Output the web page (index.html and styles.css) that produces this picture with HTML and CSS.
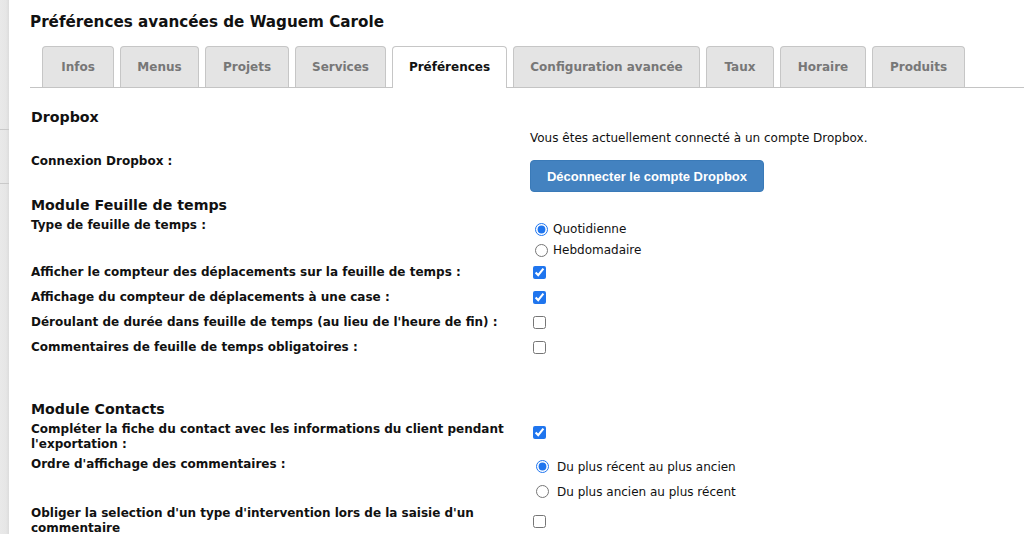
FILE: index.html
```html
<!DOCTYPE html>
<html lang="fr">
<head>
<meta charset="utf-8">
<title>Préférences avancées</title>
<link rel="stylesheet" href="styles.css">
</head>
<body>
<div class="layout">
  <aside class="side">
    <div class="side-a"></div>
    <div class="side-b"></div>
    <div class="side-c"></div>
  </aside>
  <main class="main">
    <h1 class="title">Préférences avancées de Waguem Carole</h1>
    <nav class="tabs">
      <div class="tab t-infos">Infos</div>
      <div class="tab t-menus">Menus</div>
      <div class="tab t-projets">Projets</div>
      <div class="tab t-services">Services</div>
      <div class="tab t-prefs active">Préférences</div>
      <div class="tab t-config">Configuration avancée</div>
      <div class="tab t-taux">Taux</div>
      <div class="tab t-horaire">Horaire</div>
      <div class="tab t-produits">Produits</div>
    </nav>

    <section class="content">
      <h2 class="section h-dropbox">Dropbox</h2>
      <div class="row row-dropbox">
        <div class="label center">Connexion Dropbox :</div>
        <div class="value">
          <div class="info">Vous êtes actuellement connecté à un compte Dropbox.</div>
          <button class="btn">Déconnecter le compte Dropbox</button>
        </div>
      </div>

      <h2 class="section h-feuille">Module Feuille de temps</h2>
      <div class="row row-type">
        <div class="label">Type de feuille de temps :</div>
        <div class="value radios r21">
          <label class="opt"><input type="radio" name="type" checked><span>Quotidienne</span></label>
          <label class="opt"><input type="radio" name="type"><span>Hebdomadaire</span></label>
        </div>
      </div>
      <div class="row line">
        <div class="label">Afficher le compteur des déplacements sur la feuille de temps :</div>
        <div class="value"><input type="checkbox" checked></div>
      </div>
      <div class="row line">
        <div class="label">Affichage du compteur de déplacements à une case :</div>
        <div class="value"><input type="checkbox" checked></div>
      </div>
      <div class="row line">
        <div class="label">Déroulant de durée dans feuille de temps (au lieu de l'heure de fin) :</div>
        <div class="value"><input type="checkbox"></div>
      </div>
      <div class="row line">
        <div class="label">Commentaires de feuille de temps obligatoires :</div>
        <div class="value"><input type="checkbox"></div>
      </div>

      <h2 class="section h-contacts">Module Contacts</h2>
      <div class="row row-top">
        <div class="label">Compléter la fiche du contact avec les informations du client pendant l'exportation :</div>
        <div class="value"><input type="checkbox" class="cb-top" checked></div>
      </div>
      <div class="row row-ordre">
        <div class="label">Ordre d'affichage des commentaires :</div>
        <div class="value radios r25">
          <label class="opt"><input type="radio" name="ordre" checked><span>Du plus récent au plus ancien</span></label>
          <label class="opt"><input type="radio" name="ordre"><span>Du plus ancien au plus récent</span></label>
        </div>
      </div>
      <div class="row row-oblige">
        <div class="label">Obliger la selection d'un type d'intervention lors de la saisie d'un commentaire</div>
        <div class="value center-v"><input type="checkbox"></div>
      </div>
    </section>
  </main>
</div>
</body>
</html>
```

FILE: styles.css
```css
* { box-sizing: border-box; }
html, body { margin: 0; padding: 0; background: #fff; }
body {
  font-family: "DejaVu Sans", Verdana, sans-serif;
  color: #111;
  overflow: hidden;
  height: 534px;
}
.layout { display: flex; min-height: 534px; }

.side {
  width: 9px;
  flex: none;
  display: flex;
  flex-direction: column;
  background: linear-gradient(to right, #e9e9e9 0, #e6e6e6 6px, #dcdcdc 9px);
}
.side-a { height: 130px; border-bottom: 1px solid #c9c9c9; }
.side-b { height: 54px; border-bottom: 1px solid #c9c9c9; }
.side-c { flex: 1; }

.main { flex: 1; padding: 12px 0 0 21px; }

.title {
  margin: 0;
  font-size: 15.2px;
  line-height: 20px;
  font-weight: bold;
}

.tabs {
  margin-top: 14px;
  display: flex;
  gap: 6px;
  padding-left: 12px;
  border-bottom: 1px solid #c4c4c4;
  height: 42px;
  align-items: flex-end;
}
.tab {
  height: 41px;
  line-height: 40px;
  padding: 0;
  text-align: center;
  background: #e4e4e4;
  border: 1px solid #c6c6c6;
  border-bottom: none;
  border-radius: 4px 4px 0 0;
  color: #777;
  font-weight: bold;
  font-size: 12px;
  white-space: nowrap;
  flex: none;
}
.t-infos { width: 72px; }
.t-menus { width: 79px; }
.t-projets { width: 84px; }
.t-services { width: 91px; }
.t-prefs { width: 115px; }
.t-config { width: 187px; }
.t-taux { width: 68px; }
.t-horaire { width: 86px; }
.t-produits { width: 93px; }
.tab.active {
  background: #fff;
  color: #111;
  height: 42px;
  margin-bottom: -1px;
  line-height: 41px;
}

.content { padding-left: 1px; }

.section {
  margin: 0;
  font-size: 14.2px;
  line-height: 18px;
  font-weight: bold;
}
.h-dropbox { margin-top: 20px; }
.h-feuille { margin-top: 4px; }
.h-contacts { margin-top: 40px; }

.row {
  display: grid;
  grid-template-columns: 499px 1fr;
}
.label {
  font-size: 12px;
  line-height: 15px;
  font-weight: bold;
  padding-right: 10px;
}
.label.center { align-self: center; }

.row-dropbox { margin-top: 4px; }
.info { font-size: 12px; line-height: 16px; }
.btn {
  margin-top: 14px;
  height: 32px;
  width: 234px;
  border: 1px solid #3a7ab8;
  border-radius: 4px;
  background: #4382c0;
  color: #fff;
  font-family: "Liberation Sans", Arial, sans-serif;
  font-weight: bold;
  font-size: 13px;
  padding: 0;
  display: block;
}

input { accent-color: #1f75ee; }

.row-type { margin-top: 4px; height: 42px; }
.radios { display: flex; flex-direction: column; }
.opt {
  display: flex;
  align-items: center;
  font-size: 12px;
}
.r21 .opt { height: 20px; }
.r21 .opt:first-child { margin-top: 1px; }
.r21 .opt + .opt { margin-top: 1px; }
.r25 .opt { height: 25px; }
.opt input { margin: 0 5px 0 5px; width: 13px; height: 13px; }

.line { height: 25px; align-items: center; }
.line .label { align-self: center; }
input[type="checkbox"] { margin: 0 0 0 3px; width: 13px; height: 13px; display: block; }
.line .value { display: flex; align-items: center; }

.row-top { margin-top: 4px; }
.cb-top { margin-top: 4px !important; }

.row-ordre { margin-top: 5px; }
.r25 .opt:first-child { margin-top: -3px; }
.r25 input { margin-left: 6px; margin-right: 8px; }

.row-oblige { margin-top: 2px; }
.center-v { display: flex; align-items: center; }
```
